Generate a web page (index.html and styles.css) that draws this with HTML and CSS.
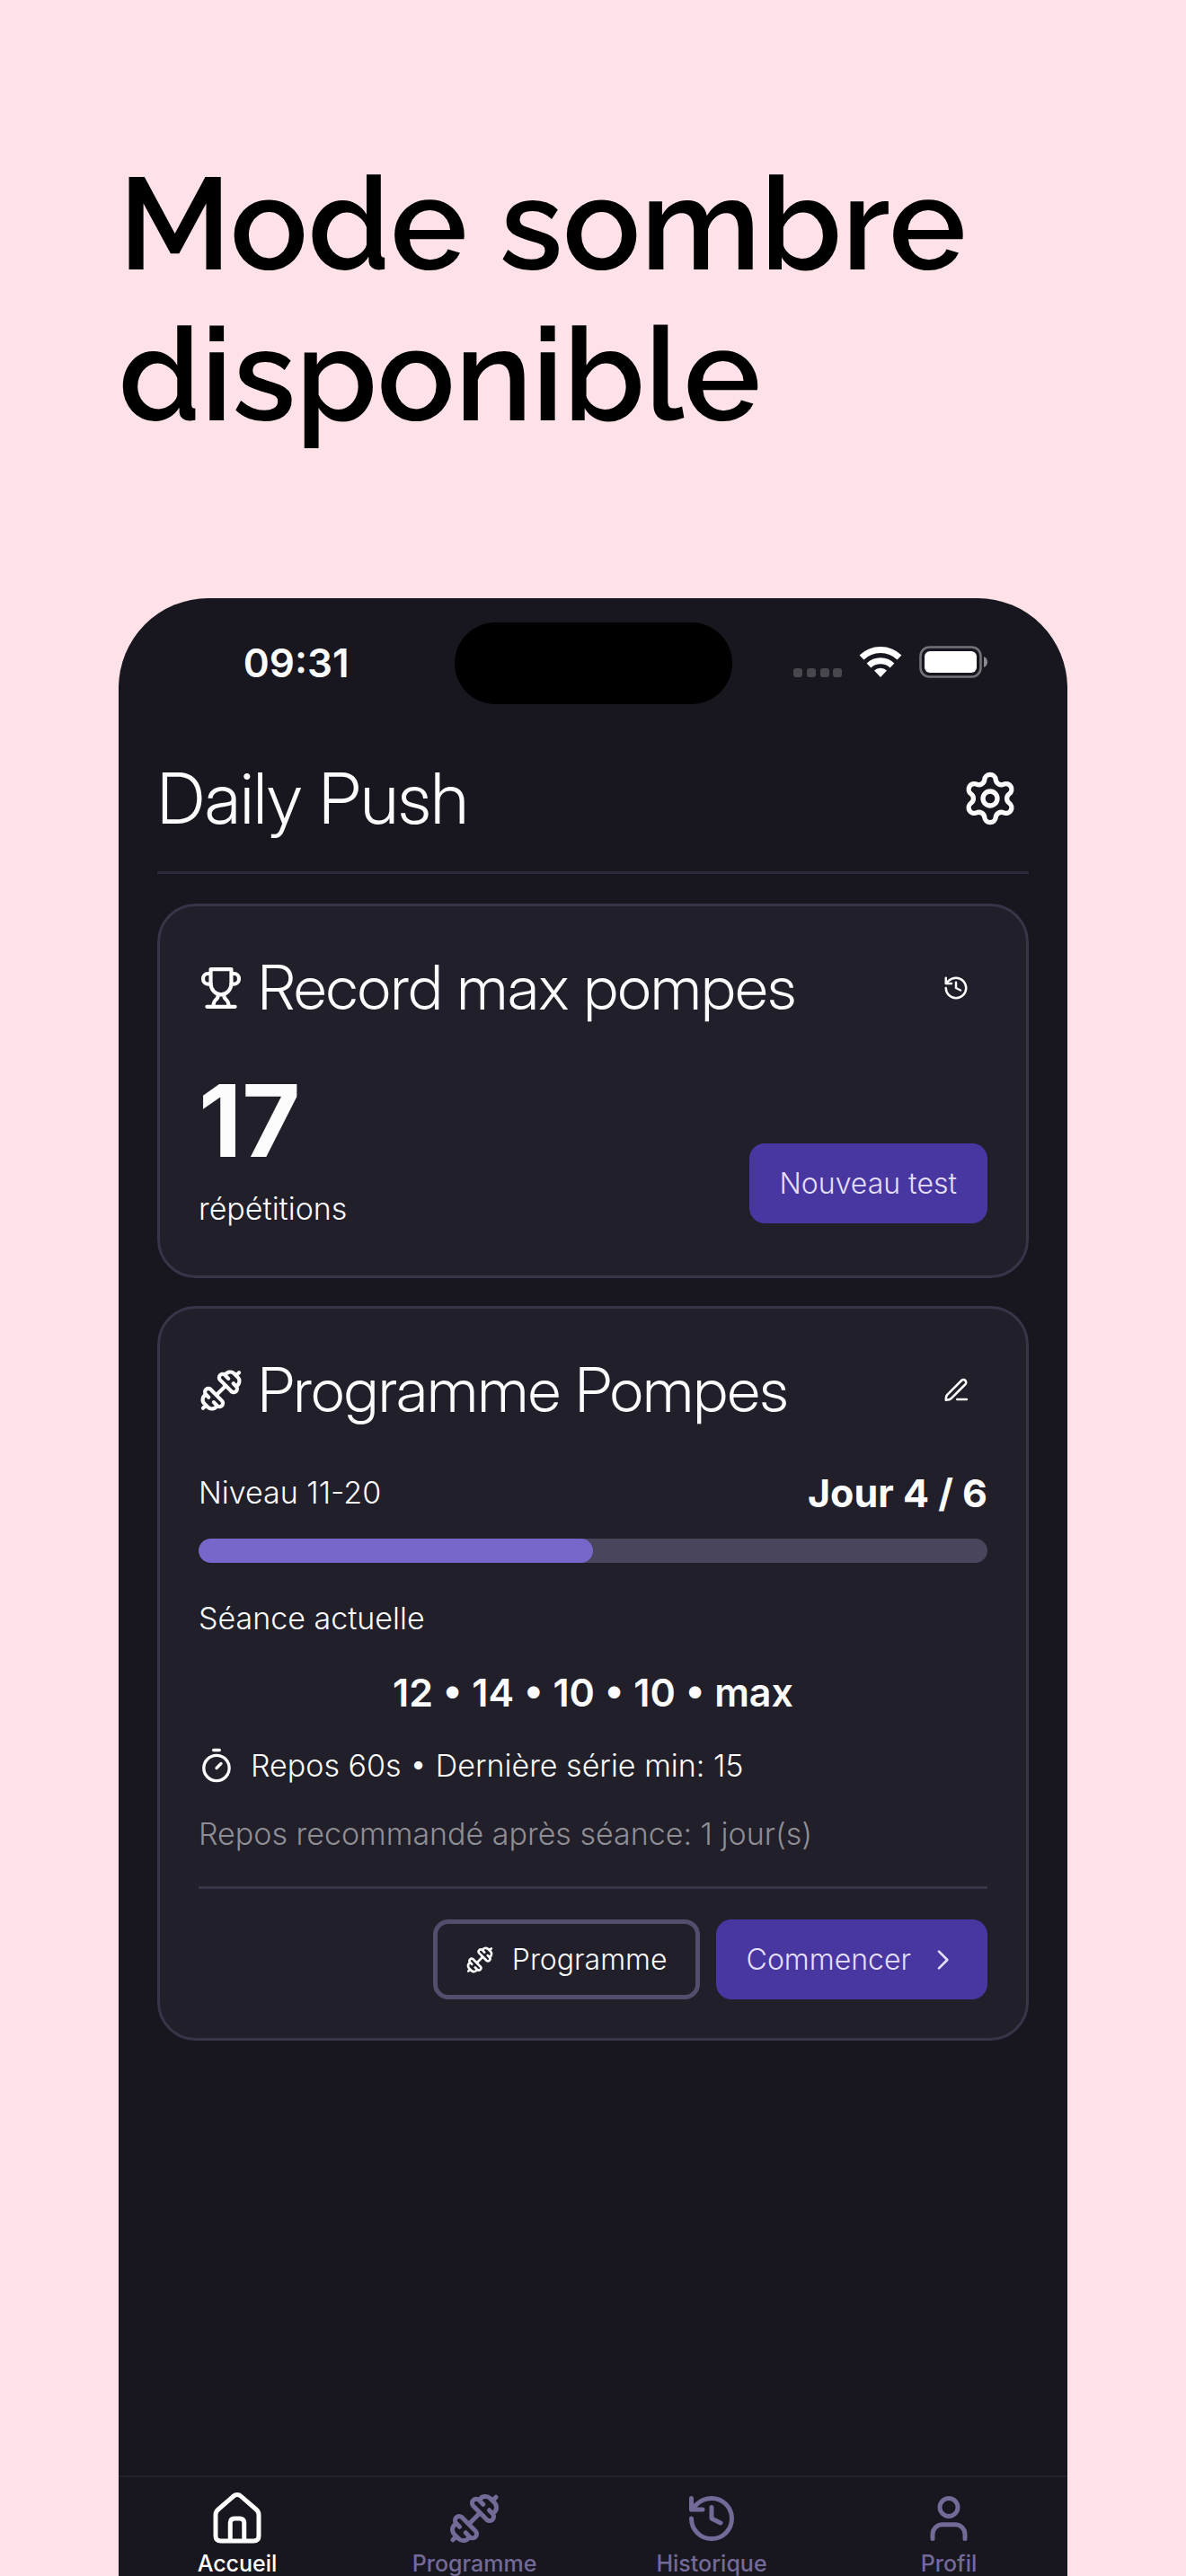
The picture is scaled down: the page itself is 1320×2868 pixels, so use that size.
FILE: index.html
```html
<!DOCTYPE html>
<html lang="fr">
<head>
<meta charset="utf-8">
<meta name="viewport" content="width=device-width, initial-scale=1">
<title>Daily Push</title>
<link rel="stylesheet" href="styles.css">
</head>
<body>
<svg class="sprite" aria-hidden="true">
  <symbol id="i-gym" viewBox="0 0 24 24">
    <path d="M9.800 14.200l4.400-4.400"/>
    <path id="gym-bell" d="M15.900 5.700L14 3.700a1.850 1.850 0 0 0-2.600 2.600L17.600 12.600a1.850 1.850 0 0 0 2.600-2.600L18.600 8.300M14.300 4C14.800 2 17.600 1.600 19 3L21 5C22.300 6.400 22 9 20 9.700M20.200 3.900L21.600 2.500"/>
    <use href="#gym-bell" transform="rotate(180 12 12)"/>
  </symbol>
  <symbol id="i-history" viewBox="0 0 24 24">
    <path d="M3 12a9 9 0 1 0 9-9 9.750 9.750 0 0 0-6.740 2.740L3 8M3 3v5h5M12 7v5l4 2"/>
  </symbol>
</svg>
<main class="page">
  <h1 class="headline">Mode sombre<br>disponible</h1>
  <section class="phone">
    <div class="status">
      <time class="clock">09:31</time>
      <span class="island"></span>
      <span class="signals">
        <svg class="cell" viewBox="0 0 54 36" aria-hidden="true"><g fill="#48474d"><rect y="25" width="10" height="10" rx="3"/><rect x="15" y="25" width="10" height="10" rx="3"/><rect x="30" y="25" width="10" height="10" rx="3"/><rect x="44" y="25" width="10" height="10" rx="3"/></g></svg>
        <svg class="wifi" viewBox="0 0 48 36" aria-hidden="true"><g fill="none" stroke="#fff" stroke-width="7"><path d="M3 13a30 30 0 0 1 42 0"/><path d="M11 22a19 19 0 0 1 26 0"/></g><path fill="#fff" d="M24 35l-7-7.500a10.500 10.500 0 0 1 14 0z"/></svg>
        <svg class="battery" viewBox="0 0 77 36" aria-hidden="true"><rect x="1.500" y="1.500" width="67" height="33" rx="10" fill="none" stroke="#747378" stroke-width="2.600"/><rect x="6" y="6" width="58" height="24" rx="6" fill="#fff"/><path fill="#8b8a8e" d="M72 12c5.300 1.600 5.300 10.400 0 12z"/></svg>
      </span>
    </div>
    <header class="topbar">
      <h2 class="app-name">Daily Push</h2>
      <button class="icon-btn" type="button" aria-label="Réglages">
        <svg class="icon icon-gear" viewBox="0 0 24 24" aria-hidden="true"><path d="M9.670 4.140a2.340 2.340 0 0 1 4.660 0 2.340 2.340 0 0 0 3.320 1.910 2.340 2.340 0 0 1 2.330 4.030 2.340 2.340 0 0 0 0 3.840 2.340 2.340 0 0 1-2.330 4.030 2.340 2.340 0 0 0-3.320 1.910 2.340 2.340 0 0 1-4.660 0 2.340 2.340 0 0 0-3.320-1.910 2.340 2.340 0 0 1-2.330-4.030 2.340 2.340 0 0 0 0-3.840 2.340 2.340 0 0 1 2.330-4.030 2.340 2.340 0 0 0 3.320-1.910"/><circle cx="12" cy="12" r="3"/></svg>
      </button>
    </header>
    <div class="cards">
      <article class="card">
        <div class="card-head">
          <svg class="icon icon-card" viewBox="0 0 24 24" aria-hidden="true"><path d="M6.500 2h11v7.500a5.500 6 0 0 1-11 0zM6.500 4.300H5A2.600 2.800 0 0 0 5 9.900h1.700M17.500 4.300H19a2.600 2.800 0 0 1 0 5.600h-1.700M4.500 22h15M10.300 15.200c.3 1.500 0 2.300-1.100 3.100C8.300 19 8 20 7.800 22M13.700 15.200c-.3 1.500 0 2.300 1.100 3.100.9.700 1.200 1.700 1.400 3.700"/></svg>
          <h3 class="card-title">Record max pompes</h3>
          <button class="icon-btn" type="button" aria-label="Historique des records"><svg class="icon icon-small" aria-hidden="true"><use href="#i-history"/></svg></button>
        </div>
        <div class="record">
          <div>
            <p class="score">17</p>
            <p class="text">répétitions</p>
          </div>
          <button class="btn btn-primary btn-test" type="button">Nouveau test</button>
        </div>
      </article>
      <article class="card">
        <div class="card-head">
          <svg class="icon icon-card" aria-hidden="true"><use href="#i-gym"/></svg>
          <h3 class="card-title">Programme Pompes</h3>
          <button class="icon-btn" type="button" aria-label="Modifier le programme"><svg class="icon icon-small" viewBox="0 0 24 24" aria-hidden="true"><path d="M3 20.500c0-2.500.3-3.700 1.200-4.600L16.900 3.200a2.400 2.400 0 0 1 3.400 3.400L7.600 19.300c-.9.900-2.100 1.200-4.600 1.200zM13 20h8.500"/></svg></button>
        </div>
        <div class="level">
          <p class="text">Niveau 11-20</p>
          <p class="day">Jour 4 / 6</p>
        </div>
        <div class="track" role="progressbar" aria-label="Progression" aria-valuemin="0" aria-valuemax="6" aria-valuenow="3"><div class="fill" style="width:50%"></div></div>
        <p class="text">Séance actuelle</p>
        <p class="sets">12 • 14 • 10 • 10 • max</p>
        <div class="rest">
          <svg class="icon icon-timer" viewBox="0 0 24 24" aria-hidden="true"><circle cx="12" cy="13.500" r="8.500"/><path d="M10 1.500h4M12 13.500l3-3"/></svg>
          <p class="text">Repos 60s • Dernière série min: 15</p>
        </div>
        <p class="text text-muted">Repos recommandé après séance: 1 jour(s)</p>
        <div class="actions">
          <button class="btn btn-outline" type="button"><svg class="icon icon-inline" aria-hidden="true"><use href="#i-gym"/></svg>Programme</button>
          <button class="btn btn-primary btn-next" type="button">Commencer<svg class="icon icon-inline" viewBox="0 0 24 24" aria-hidden="true"><path d="M9 5l7 7-7 7"/></svg></button>
        </div>
      </article>
    </div>
    <nav class="tabs">
      <a class="tab tab-active" href="#accueil" aria-current="page"><svg class="icon icon-tab" viewBox="0 0 24 24" aria-hidden="true"><path d="M2.400 10.300c0-.8.300-1.500.9-2.100l7-6.100c1-.9 2.400-.9 3.400 0l7 6.100c.6.600.9 1.300.9 2.100V19.700c0 1.500-.8 2.300-2.300 2.300H4.700c-1.500 0-2.300-.8-2.300-2.300zM8.900 22v-8c0-1.400.6-2 2-2h2.200c1.400 0 2 .6 2 2v8"/></svg>Accueil</a>
      <a class="tab" href="#programme"><svg class="icon icon-tab" aria-hidden="true"><use href="#i-gym"/></svg>Programme</a>
      <a class="tab" href="#historique"><svg class="icon icon-tab" aria-hidden="true"><use href="#i-history"/></svg>Historique</a>
      <a class="tab" href="#profil"><svg class="icon icon-tab" viewBox="0 0 24 24" aria-hidden="true"><circle cx="12" cy="7" r="4"/><path d="M4.800 21v-2a4.300 4.300 0 0 1 4.300-4.300h5.800a4.300 4.300 0 0 1 4.300 4.300v2"/></svg>Profil</a>
    </nav>
  </section>
</main>
</body>
</html>
```
FILE: styles.css
```css
* { box-sizing: border-box; }
body { margin: 0; background: #fee2e7; color: #fcfcfd; font-family: Inter, "Liberation Sans", sans-serif; }
h1, h2, h3, p { margin: 0; font-weight: 300; }
button { margin: 0; padding: 0; border: 0; background: none; color: inherit; font: inherit; cursor: pointer; }
.sprite { position: absolute; width: 0; height: 0; }
.icon { flex: none; fill: none; stroke: currentColor; stroke-width: 2; stroke-linecap: round; stroke-linejoin: round; }

.page { display: flex; flex-direction: column; min-height: 100vh; padding: 166px 10% 0; }
.headline { margin-bottom: 164px; color: #000; font-family: Raleway, Lato, sans-serif; font-size: 144px; font-weight: 600; line-height: 168px; }
.phone { flex: 1; display: flex; flex-direction: column; padding-top: 27px; border-radius: 100px 100px 0 0; background: #18161e; overflow: hidden; }

.status { display: grid; grid-template-columns: 1fr 309px 1fr; align-items: center; }
.clock { padding: 0 0 2px 22px; text-align: center; font-size: 44px; font-weight: 600; line-height: 56px; }
.island { height: 91px; border-radius: 46px; background: #000; }
.signals { display: flex; gap: 19px; justify-content: center; padding: 0 20px 4px 0; }
.cell { width: 54px; height: 36px; }
.wifi { width: 48px; height: 36px; }
.battery { width: 77px; height: 36px; }

.topbar { display: flex; justify-content: space-between; align-items: center; margin: 0 43px; padding: 55px 11px 32px 0; border-bottom: 3px solid #2c2a3a; }
.app-name { font-family: "Inter Display", Inter, "Liberation Sans", sans-serif; font-size: 78px; line-height: 99px; }
.icon-btn { display: flex; }
.icon-gear { width: 64px; height: 64px; }

.cards { flex: 1; display: flex; flex-direction: column; gap: 31px; padding: 33px 43px; }
.card { padding: 43px; border: 3px solid #393549; border-radius: 43px; background: #211f29; }
.card-head { display: flex; align-items: center; gap: 16px; margin-bottom: 37px; }
.card-head .icon-btn { margin-left: auto; padding-right: 20px; }
.icon-card { width: 50px; height: 50px; }
.icon-small { width: 30px; height: 30px; }
.card-title { font-family: "Inter Display", Inter, "Liberation Sans", sans-serif; font-size: 68px; line-height: 95px; }
.text { font-size: 34px; line-height: 48px; }
.text-muted { color: #8f8e94; }
.record { display: flex; justify-content: space-between; align-items: flex-end; padding-bottom: 7px; }
.score { margin-bottom: 12px; font-size: 112px; font-weight: 700; line-height: 126px; }

.btn { display: flex; align-items: center; justify-content: center; height: 89px; padding: 0 34px; border-radius: 17px; font-size: 32px; font-weight: 300; }
.btn-primary { background: #4937a1; color: #e4dffb; }
.btn-test { margin-bottom: 8px; }
.btn-outline { gap: 20px; padding: 0 31px; border: 5px solid #544e6e; }
.btn-next { gap: 19px; }
.icon-inline { width: 32px; height: 32px; }

.level { display: flex; justify-content: space-between; align-items: center; margin-bottom: 21px; }
.day { font-size: 43px; font-weight: 700; line-height: 60px; }
.track { height: 27px; margin-bottom: 38px; border-radius: 14px; background: #49455c; overflow: hidden; }
.fill { height: 100%; border-radius: 14px; background: #7867cb; }
.sets { margin: 28px 0; text-align: center; font-size: 43px; font-weight: 600; line-height: 60px; }
.rest { display: flex; align-items: center; gap: 18px; margin-bottom: 28px; }
.icon-timer { width: 40px; height: 40px; }
.actions { display: flex; justify-content: flex-end; gap: 18px; margin-top: 34px; padding-top: 34px; border-top: 3px solid #393549; }

.tabs { display: grid; grid-template-columns: repeat(4, 1fr); padding-top: 16px; border-top: 2px solid #24222c; }
.tab { display: flex; flex-direction: column; align-items: center; gap: 6px; color: #736a98; font-size: 25px; font-weight: 500; line-height: 28px; text-decoration: none; }
.tab-active { color: #fff; }
.icon-tab { width: 60px; height: 60px; }
```
